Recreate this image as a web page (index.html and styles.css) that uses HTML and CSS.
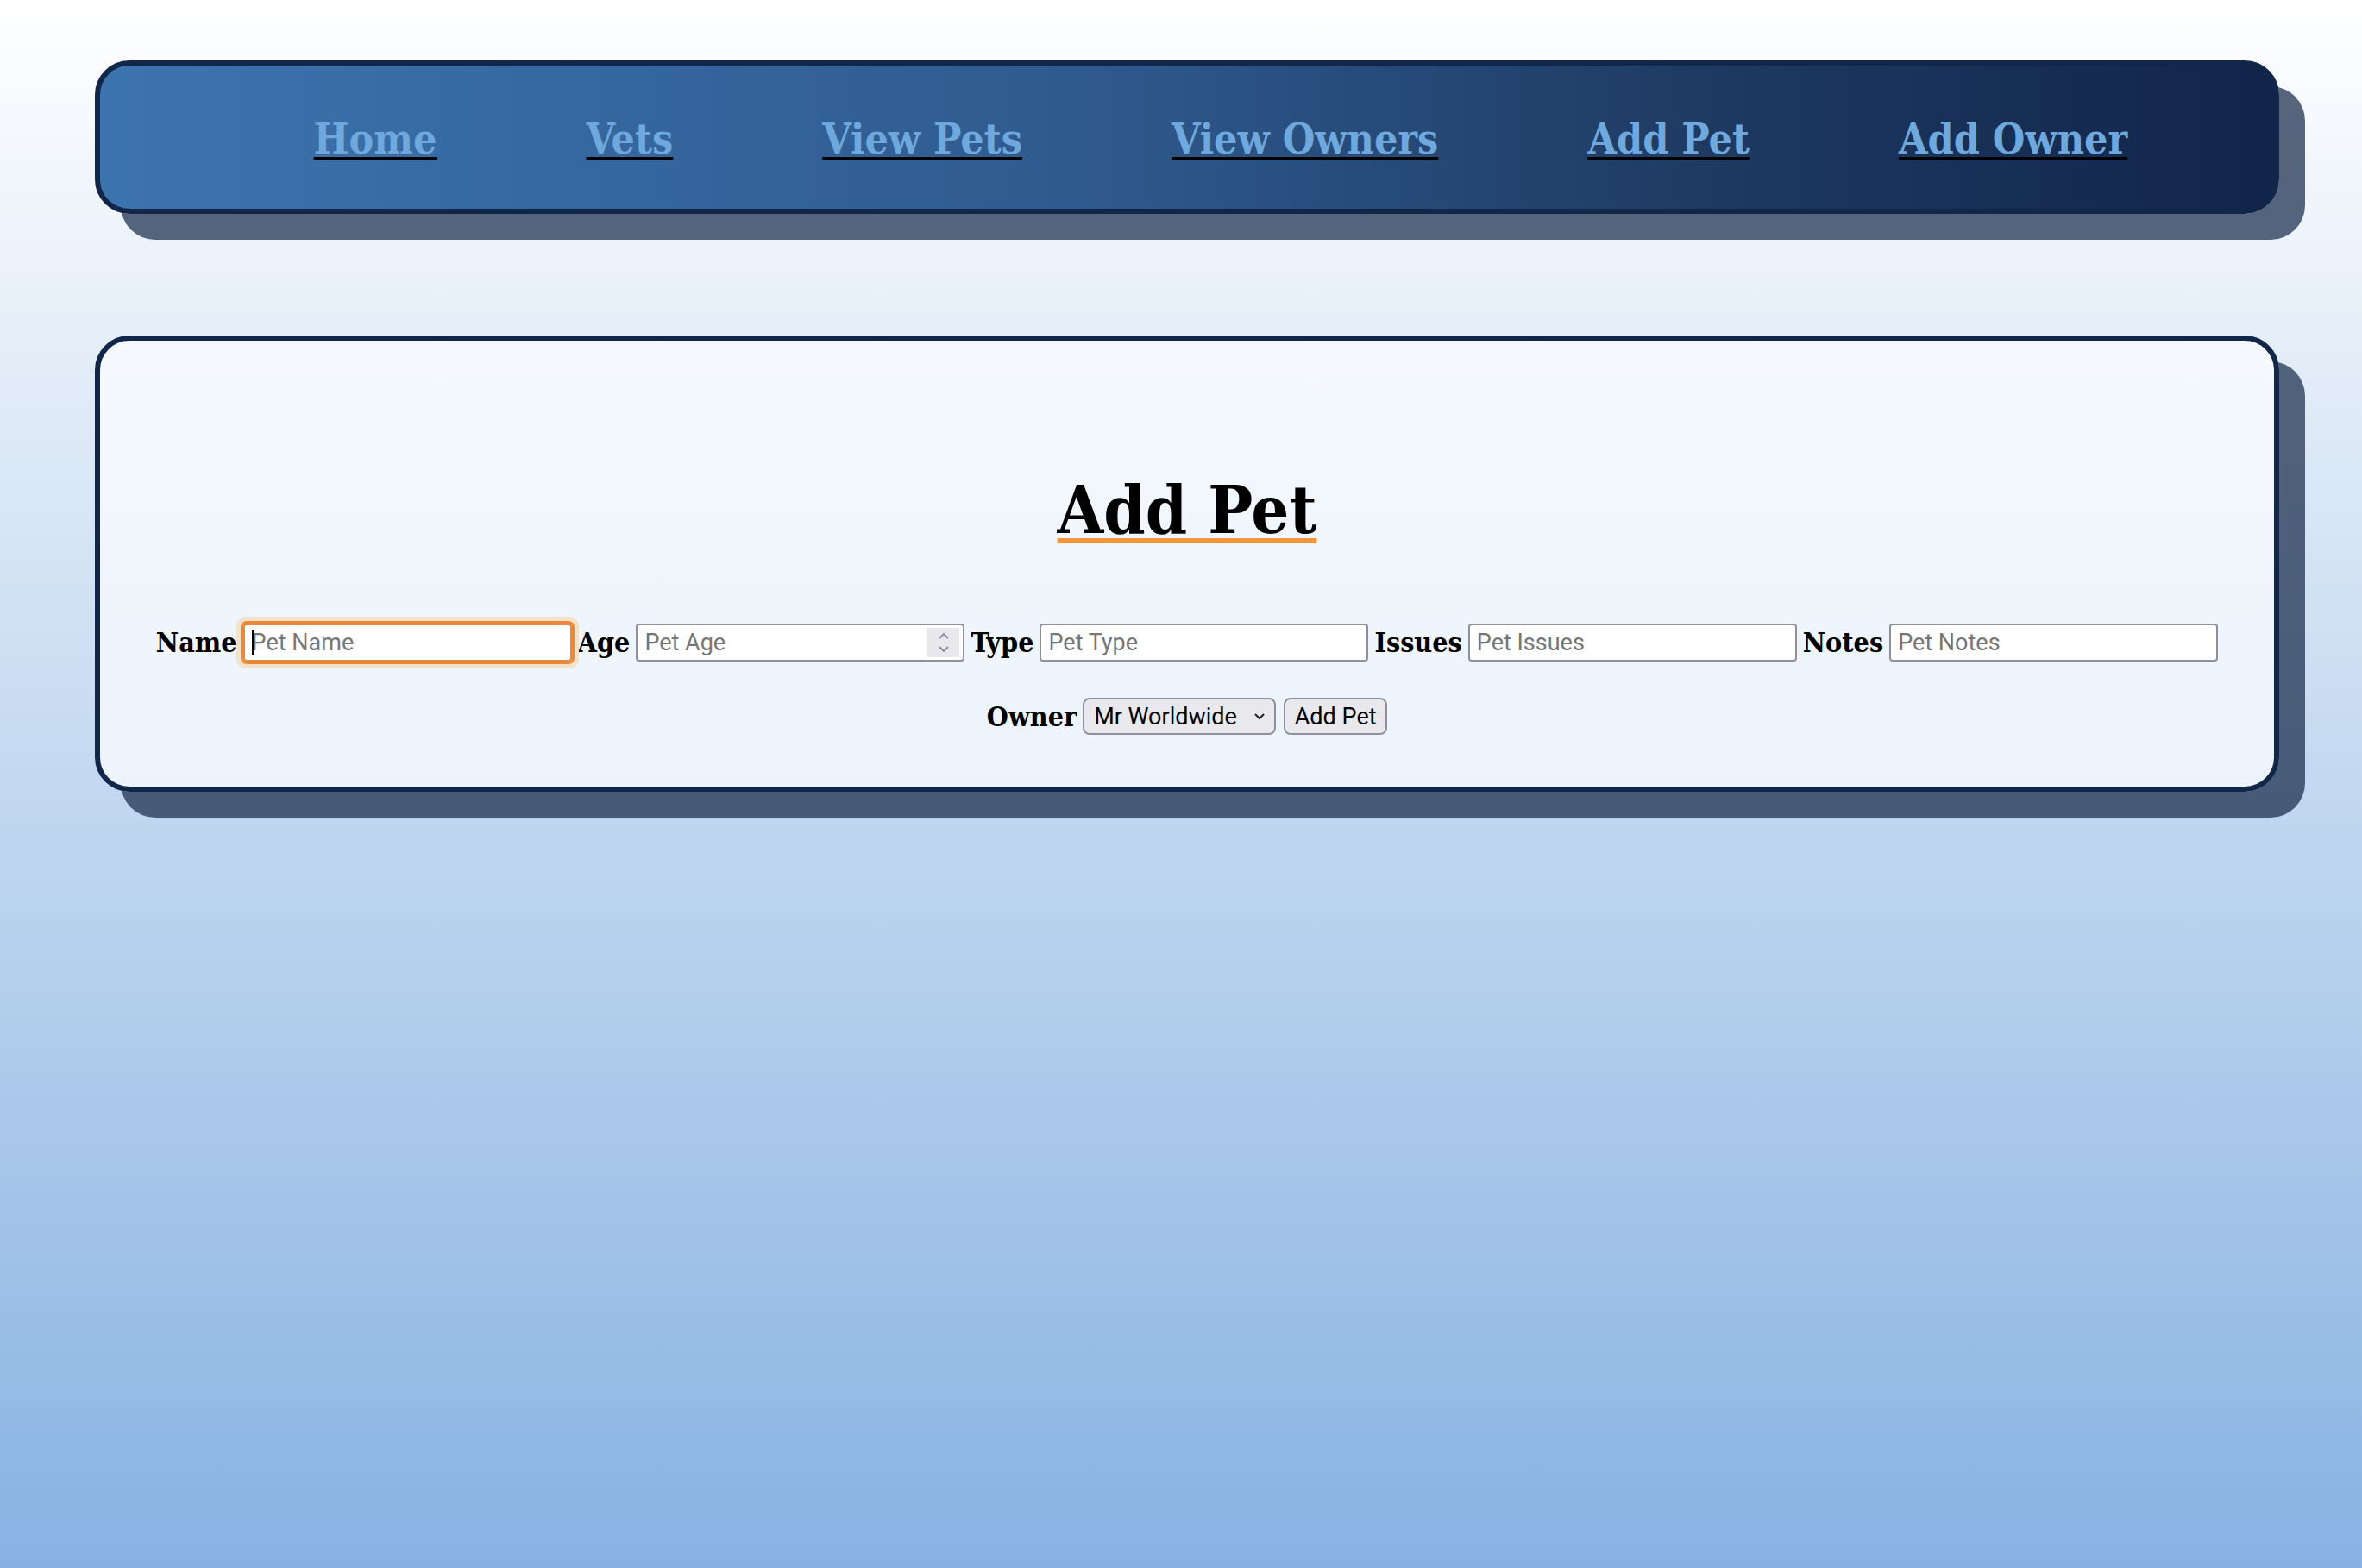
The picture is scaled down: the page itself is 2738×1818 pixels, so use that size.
FILE: index.html
```html
<!DOCTYPE html>
<html lang="en">
<head>
<meta charset="utf-8">
<title>Add Pet</title>
<link rel="stylesheet" href="styles.css">
</head>
<body>
<nav class="topbar">
  <a class="nav-link" href="#">Home</a>
  <a class="nav-link" href="#">Vets</a>
  <a class="nav-link" href="#">View Pets</a>
  <a class="nav-link" href="#">View Owners</a>
  <a class="nav-link" href="#">Add Pet</a>
  <a class="nav-link" href="#">Add Owner</a>
</nav>
<main class="card">
  <h1 class="title">Add Pet</h1>
  <form class="pet-form">
    <label class="field-label" for="name">Name</label>
    <span class="field-wrap"><input class="field is-focused" id="name" type="text" placeholder="Pet Name"><span class="caret"></span></span>
    <label class="field-label" for="age">Age</label>
    <span class="field-wrap"><input class="field" id="age" type="text" placeholder="Pet Age"><span class="spin"><svg width="14" height="26" viewBox="0 0 14 26"><path d="M2 8 L7 3 L12 8" fill="none" stroke="#8a8a93" stroke-width="1.8"/><path d="M2 18 L7 23 L12 18" fill="none" stroke="#8a8a93" stroke-width="1.8"/></svg></span></span>
    <label class="field-label" for="type">Type</label>
    <input class="field" id="type" type="text" placeholder="Pet Type">
    <label class="field-label" for="issues">Issues</label>
    <input class="field" id="issues" type="text" placeholder="Pet Issues">
    <label class="field-label" for="notes">Notes</label>
    <input class="field" id="notes" type="text" placeholder="Pet Notes">
    <label class="field-label" for="owner">Owner</label>
    <span class="select-wrap"><select class="select" id="owner"><option>Mr Worldwide</option></select><svg class="chev" width="14" height="10" viewBox="0 0 14 10"><path d="M2 2 L7 7 L12 2" fill="none" stroke="#222" stroke-width="2"/></svg></span>
    <button class="btn" type="button">Add Pet</button>
  </form>
</main>
</body>
</html>
```
FILE: styles.css
```css
html, body {
  margin: 0;
  padding: 0;
}
body {
  min-height: 100vh;
  box-sizing: border-box;
  padding: 70px 96px 0 110px;
  background: linear-gradient(180deg, #ffffff 0%, #87b2e2 100%);
  font-family: "DejaVu Serif", serif;
  font-stretch: condensed;
}
.topbar {
  box-sizing: border-box;
  height: 178px;
  border: 6px solid #12264a;
  border-radius: 40px;
  background: linear-gradient(90deg, #3c74ae 0%, #2f5a8f 45%, #1d3960 75%, #12244a 100%);
  box-shadow: 30px 30px 0 rgba(18, 38, 70, 0.7);
  display: flex;
  align-items: center;
  justify-content: center;
  gap: 173px;
  padding-left: 78px;
  padding-top: 4px;
}
.nav-link {
  color: #6fa8dc;
  font-size: 48px;
  font-weight: 700;
  text-decoration: underline;
  text-decoration-color: #000;
  text-decoration-thickness: 3px;
  text-underline-offset: 4px;
}
.card {
  box-sizing: border-box;
  margin-top: 141px;
  height: 529px;
  border: 6px solid #12264a;
  border-radius: 40px;
  background: linear-gradient(180deg, #f5f9fe 0%, #ecf3fb 100%);
  box-shadow: 30px 30px 0 rgba(18, 38, 70, 0.7);
  padding: 0 40px;
  display: flex;
  flex-direction: column;
  align-items: center;
}
.title {
  margin: 148px 0 0;
  font-size: 77px;
  line-height: 96px;
  font-weight: 700;
  color: #000;
  text-decoration: underline;
  text-decoration-color: #f2953b;
  text-decoration-thickness: 6px;
  text-underline-offset: 6px;
}
.pet-form {
  margin-top: 84px;
  display: flex;
  flex-wrap: wrap;
  justify-content: center;
  align-items: center;
  column-gap: 7px;
  row-gap: 42px;
}
.field-label {
  font-size: 32px;
  font-weight: 700;
  color: #000;
}
.field-wrap,
.select-wrap {
  position: relative;
  display: inline-flex;
}
.field {
  box-sizing: border-box;
  width: 381px;
  height: 44px;
  margin: 0;
  padding: 0 8px;
  border: 2px solid #8f8f9d;
  border-radius: 4px;
  background: #fff;
  font-family: Roboto, "Noto Sans", sans-serif;
  font-size: 27px;
  color: #000;
  outline: none;
}
.field::placeholder {
  color: #767676;
}
.field.is-focused {
  border-color: #e98a3b;
  outline: 3px solid #e98a3b;
  outline-offset: 0;
  box-shadow: 0 0 0 8px #f1e2c9;
}
.caret {
  position: absolute;
  left: 10px;
  top: 8px;
  width: 2px;
  height: 28px;
  background: #000;
}
.spin {
  position: absolute;
  right: 6px;
  top: 5px;
  width: 37px;
  height: 34px;
  background: #e9e9ed;
  display: flex;
  align-items: center;
  justify-content: center;
}
.select {
  box-sizing: border-box;
  appearance: none;
  -webkit-appearance: none;
  width: 224px;
  height: 43px;
  margin: 0;
  padding: 0 0 0 11px;
  border: 2px solid #8f8f9d;
  border-radius: 8px;
  background: #e9e9ed;
  font-family: Roboto, "Noto Sans", sans-serif;
  font-size: 27px;
  color: #000;
}
.chev {
  position: absolute;
  right: 12px;
  top: 17px;
  pointer-events: none;
}
.btn {
  box-sizing: border-box;
  width: 120px;
  height: 43px;
  margin: 0 0 0 2px;
  padding: 0;
  border: 2px solid #8f8f9d;
  border-radius: 8px;
  background: #e9e9ed;
  font-family: Roboto, "Noto Sans", sans-serif;
  font-size: 27px;
  color: #000;
}
```
